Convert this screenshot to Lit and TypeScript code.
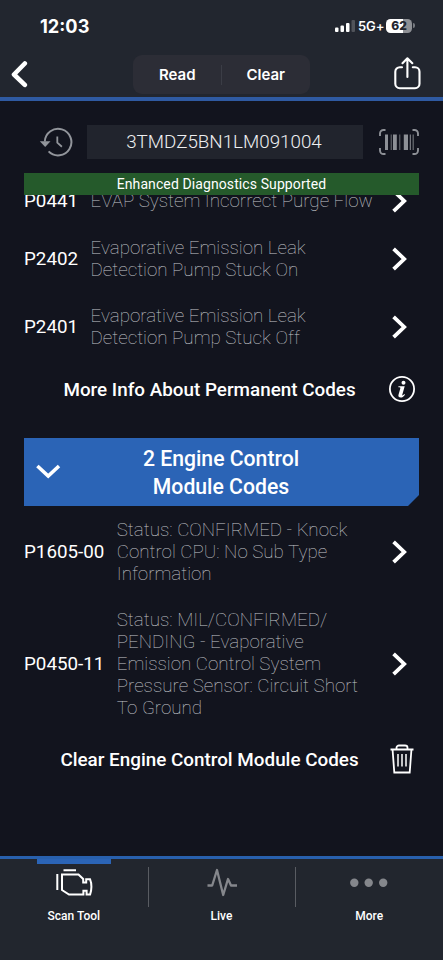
import { LitElement, html, css, svg } from "lit";
import { customElement, property } from "lit/decorators.js";

const chevron = html`<svg width="15" height="24" viewBox="0 0 15 24" fill="none" stroke="#fff" stroke-width="3.8"><path d="M1.6 1.8 12.2 12 1.6 22.2"/></svg>`;

@customElement("code-row")
class CodeRow extends LitElement {
  @property() code = "";
  @property({ type: Array }) lines: string[] = [];

  static styles = css`
    :host { display: flex; align-items: center; padding: 12px 12px 12px 0; }
    .code { font-size: 18.8px; line-height: 22px; color: #fff; margin-right: 12.4px; white-space: nowrap; }
    .desc { flex: 1; font-size: 18.8px; line-height: 22px; font-weight: 100; color: #c3c5ca; white-space: nowrap; }
    svg { display: block; flex: none; margin: -2px 0 -1px; }
  `;

  render() {
    return html`
      <div class="code">${this.code}</div>
      <div class="desc">${this.lines.map((l) => html`<div>${l}</div>`)}</div>
      ${chevron}
    `;
  }
}

@customElement("app-root")
class AppRoot extends LitElement {
  static styles = css`
    :host {
      display: flex; flex-direction: column; width: 443px; height: 960px; overflow: hidden;
      background: #12141e; color: #fff; font-family: Roboto, "Liberation Sans", sans-serif;
    }
    * { box-sizing: border-box; }
    svg { display: block; flex: none; }
    header { height: 101px; flex: none; background: #22262f; border-bottom: 4px solid #2f5aa2; }
    .status { height: 51px; padding: 0 28px 0 40px; display: flex; align-items: center; justify-content: space-between; font-family: Inter, sans-serif; }
    .time { font-size: 18.2px; font-weight: 700; letter-spacing: 0; }
    .signals { display: flex; align-items: center; }
    .net { font-size: 13px; font-weight: 600; margin: 0 2px 0 2px; width: 26px; letter-spacing: -0.1px; }
    .battery { width: 26px; height: 14px; border-radius: 4.5px; background: linear-gradient(90deg, #fff 64%, #8e9095 64%); color: #22262f; font-size: 12px; line-height: 14px; font-weight: 800; text-align: center; }
    .nub { width: 2px; height: 5px; margin-left: 1px; border-radius: 0 2px 2px 0; background: #777a80; }
    .toolbar { height: 46px; display: flex; align-items: center; justify-content: space-between; padding: 1px 22px 0 11px; }
    .segment { display: flex; align-items: center; width: 177px; height: 39px; margin: -1px 0 0 20px; padding: 1px 0 0 1px; border-radius: 9px; background: #2c2d36; font: 600 15px Inter, sans-serif; }
    .segment span { flex: 1; text-align: center; }
    .segment i { width: 1px; height: 20px; background: #3b3d46; }
    .vin-row { display: flex; align-items: center; height: 34px; margin: 24px 24px 14px 39px; flex: none; }
    .vin { width: 276px; height: 34px; margin: 0 16px 0 14px; padding-right: 2px; background: #21242d; font-size: 18.8px; line-height: 34px; font-weight: 300; text-align: center; color: #eeeff1; }
    .banner { height: 22px; margin: 0 24px; background: #255a2b; font-size: 14px; line-height: 22px; text-align: center; flex: none; letter-spacing: 0.1px; }
    main { flex: 1; min-height: 0; overflow: hidden; padding: 0 24px; display: flex; flex-direction: column; }
    main > * { flex: none; }
    .first { margin: -17px 0 1px; }
    .action { display: flex; align-items: center; height: 58px; font-size: 18.85px; font-weight: 500; white-space: nowrap; }
    .action span { flex: none; width: 371px; text-align: center; }
    .action svg { margin: 0 0 2px -7px; }
    .module { display: flex; align-items: center; height: 68px; margin: 19px 0 1px; padding-left: 12px; background: #2b64b6; clip-path: polygon(0 0, 100% 0, 100% 57px, calc(100% - 11px) 100%, 0 100%); }
    .module div { width: 320px; padding-top: 1px; font-size: 21.2px; line-height: 28px; font-weight: 500; text-align: center; }
    nav { display: flex; height: 104px; flex: none; background: #22262e; border-top: 3px solid #2860ad; }
    .tab { position: relative; flex: 1; display: flex; flex-direction: column; align-items: center; padding-top: 7px; font-size: 12px; font-weight: 500; }
    .tab + .tab::before { content: ""; position: absolute; left: 0; top: 8px; width: 1px; height: 40px; background: #595c62; }
    .tab.on::after { content: ""; position: absolute; top: 0; left: 37px; width: 74px; height: 5px; background: #2b64b6; }
    .tab svg { margin-bottom: 5px; }
  `;

  render() {
    const bars: [number, number, string][] = [
      [6, 3, "#8d9096"], [11.7, 1, "#6d7076"], [14, 3.8, "#8d9096"], [20.3, 1, "#6d7076"],
      [24.8, 4.2, "#8d9096"], [30.8, 1, "#8d9096"], [33.6, 1.2, "#6d7076"],
    ];
    return html`
      <header>
        <div class="status">
          <div class="time">12:03</div>
          <div class="signals">
            <svg width="22" height="14" viewBox="0 0 22 14" fill="#fff">
              <rect x="1" y="8.5" width="3.5" height="4.5" rx="1"/><rect x="6.5" y="6.5" width="3.5" height="6.5" rx="1"/>
              <rect x="12" y="4" width="3.5" height="9" rx="1"/><rect x="17.5" y="1" width="3.5" height="12" rx="1" fill="#50535a"/>
            </svg>
            <div class="net">5G+</div>
            <div class="battery">62</div><div class="nub"></div>
          </div>
        </div>
        <div class="toolbar">
          <svg width="18" height="28" viewBox="0 0 18 28" fill="none" stroke="#fff" stroke-width="4.6" stroke-linecap="round" stroke-linejoin="round"><path d="M13.8 2.5 3 13.5l10.8 10.4"/></svg>
          <div class="segment"><span>Read</span><i></i><span>Clear</span></div>
          <svg width="28" height="36" viewBox="0 0 28 36" fill="none" stroke="#fff" stroke-width="2.1" stroke-linecap="round" stroke-linejoin="round"><path d="M9 10.2H6.8a4.5 4.5 0 0 0-4.5 4.5v12a4.5 4.5 0 0 0 4.5 4.5h15.2a4.5 4.5 0 0 0 4.5-4.5v-12a4.5 4.5 0 0 0-4.5-4.5h-2.2M14.4 20V1.4M9.5 6.2l4.9-4.9 4.9 4.9"/></svg>
        </div>
      </header>
      <div class="vin-row">
        <svg width="34" height="32" viewBox="0 0 34 32" fill="none" stroke="#92959b" stroke-width="2"><path d="M5.8 15.5A13.3 13.3 0 1 1 9.6 25.4"/><path d="M18.3 10.5v6.2l4.6 4" stroke-width="1.8"/><path d="M.8 15.2h10.7L6.2 21z" fill="#92959b" stroke="none"/></svg>
        <div class="vin">3TMDZ5BN1LM091004</div>
        <svg width="40" height="28" viewBox="0 0 40 28" fill="none"><path d="M6.5 2H4.5A3.5 3.5 0 0 0 1 5.5V8M33.5 2h2A3.5 3.5 0 0 1 39 5.5V8M39 20v2.5A3.5 3.5 0 0 1 35.5 26h-2M6.5 26h-2A3.5 3.5 0 0 1 1 22.5V20" stroke="#8d9096" stroke-width="1.9"/>${bars.map(([x, w, c]) => svg`<rect x=${x} y="6.5" width=${w} height="15.5" fill=${c}/>`)}</svg>
      </div>
      <div class="banner">Enhanced Diagnostics Supported</div>
      <main>
        <code-row class="first" code="P0441" .lines=${["EVAP System Incorrect Purge Flow"]}></code-row>
        <code-row code="P2402" .lines=${["Evaporative Emission Leak", "Detection Pump Stuck On"]}></code-row>
        <code-row code="P2401" .lines=${["Evaporative Emission Leak", "Detection Pump Stuck Off"]}></code-row>
        <div class="action">
          <span>More Info About Permanent Codes</span>
          <svg width="28" height="28" viewBox="0 0 28 28"><circle cx="14" cy="14" r="12.1" fill="none" stroke="#fff" stroke-width="1.8"/><circle cx="15.5" cy="7.8" r="2" fill="#fff"/><path d="M10.4 11.2h6.3l-2.5 8.8c-.2.8.5.8 2.1-.9l.7.6c-1.5 2.1-2.8 2.8-4.3 2.8-1.9 0-2.7-1.2-2.2-2.8l1.8-6.2c.3-1-.2-1.2-1.9-1.2z" fill="#fff"/></svg>
        </div>
        <div class="module">
          <svg width="25" height="16" viewBox="0 0 25 16" fill="none" stroke="#fff" stroke-width="3.6"><path d="M1.4 2 12.2 12 23 2"/></svg>
          <div>2 Engine Control<br>Module Codes</div>
        </div>
        <code-row code="P1605-00" .lines=${["Status: CONFIRMED - Knock", "Control CPU: No Sub Type", "Information"]}></code-row>
        <code-row code="P0450-11" .lines=${["Status: MIL/CONFIRMED/", "PENDING - Evaporative", "Emission Control System", "Pressure Sensor: Circuit Short", "To Ground"]}></code-row>
        <div class="action">
          <span>Clear Engine Control Module Codes</span>
          <svg width="28" height="30" viewBox="-1 0 28 30" fill="none" stroke="#fff" stroke-width="1.8"><path d="M1.5 5.5h23M3.6 6l1.7 22.5h15.4L22.4 6M7.5 5V3.8C7.5 2.4 8.7 1.5 10 1.5h6c1.3 0 2.5.9 2.5 2.3V5"/><path d="M9 10v12.5M13 10v12.5M17 10v12.5" stroke-width="1.5"/></svg>
        </div>
      </main>
      <nav>
        <div class="tab on">
          <svg width="38" height="38" viewBox="0 0 38 38" fill="none" stroke="#fff" stroke-width="2"><path d="M2.3 8v16M8.5 4.3h12.5"/><path d="M7 8.5h16.5l4.7 4.5v3.5h3v-3.3h3.8c1.8 4.5 1.8 10 .1 15.3h-3.5v-3.8h-3.2v3.8H14L7 24z"/></svg>
          Scan Tool
        </div>
        <div class="tab">
          <svg width="32" height="38" viewBox="0 0 32 38" fill="none" stroke="#85878c" stroke-width="2.3" stroke-linejoin="round"><path d="M1.5 19.5h4.7L11 4l6.2 25L22 13l3 6.5h6"/></svg>
          Live
        </div>
        <div class="tab">
          <svg width="38" height="38" viewBox="0 0 38 38" fill="#85878c"><circle cx="4.3" cy="16.7" r="4.2"/><circle cx="18.7" cy="16.7" r="4.2"/><circle cx="33.2" cy="16.7" r="4.2"/></svg>
          More
        </div>
      </nav>
    `;
  }
}
